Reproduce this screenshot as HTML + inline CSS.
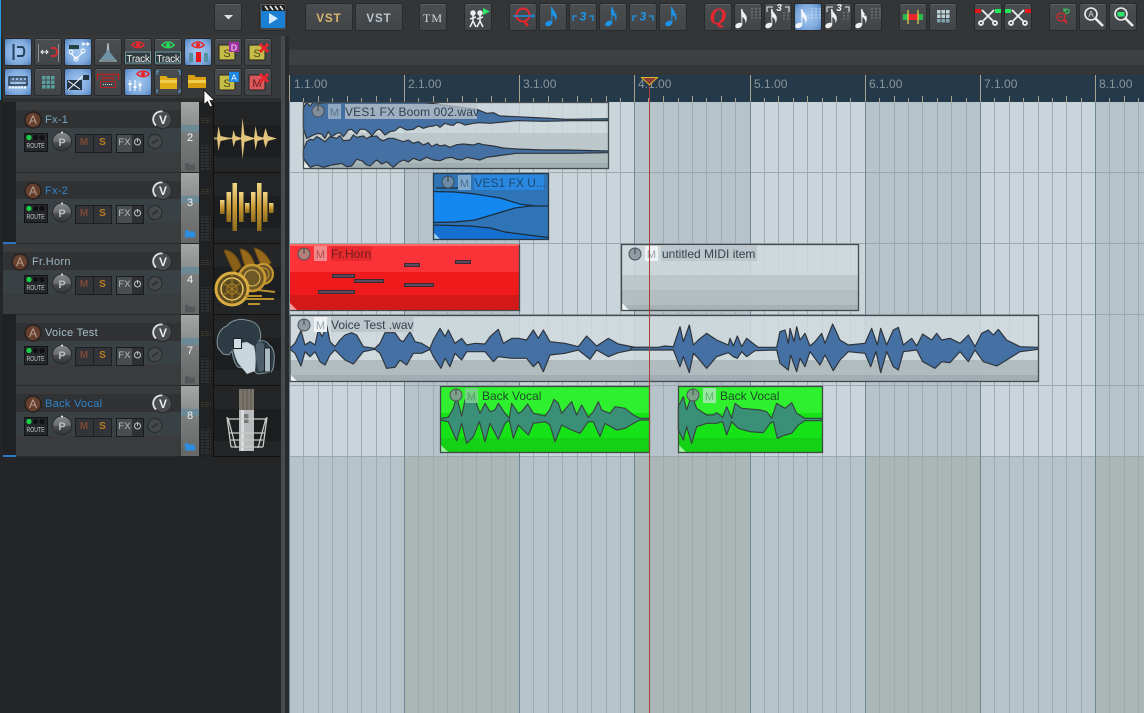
<!DOCTYPE html>
<html><head><meta charset="utf-8"><style>
html,body{margin:0;padding:0;background:#252627;overflow:hidden}
svg{display:block;font-family:"Liberation Sans",sans-serif}
</style></head><body>
<svg width="1144" height="713" viewBox="0 0 1144 713" xmlns="http://www.w3.org/2000/svg">
<defs>
<linearGradient id="gb" x1="0" y1="0" x2="0" y2="1"><stop offset="0" stop-color="#4b4e51"/><stop offset="1" stop-color="#424548"/></linearGradient>
<radialGradient id="ga" cx=".5" cy=".5" r=".72"><stop offset="0" stop-color="#a4c9f0"/><stop offset=".6" stop-color="#80aade"/><stop offset="1" stop-color="#4576b4"/></radialGradient>
<linearGradient id="gold" x1="0" y1="0" x2="0" y2="1"><stop offset="0" stop-color="#f2d88a"/><stop offset=".5" stop-color="#c99a35"/><stop offset="1" stop-color="#8f6a20"/></linearGradient>
<linearGradient id="knob" x1="0" y1="0" x2="0" y2="1"><stop offset="0" stop-color="#86898b"/><stop offset=".5" stop-color="#6a6d6f"/><stop offset=".55" stop-color="#4b4d4f"/><stop offset="1" stop-color="#303234"/></linearGradient>
<linearGradient id="num" x1="0" y1="0" x2="0" y2="1"><stop offset="0" stop-color="#a5a7a6"/><stop offset=".32" stop-color="#8e908f"/><stop offset=".33" stop-color="#6b8a96"/><stop offset=".42" stop-color="#6b8a96"/><stop offset=".43" stop-color="#7c7e7e"/><stop offset="1" stop-color="#666868"/></linearGradient>
<pattern id="mt" patternUnits="userSpaceOnUse" width="5" height="3"><rect width="4" height="2" fill="#2f3031"/></pattern>
<pattern id="mo" patternUnits="userSpaceOnUse" width="5" height="2"><rect width="4" height="1" fill="#36362a"/></pattern>
<g id="b"><rect x=".5" y=".5" width="27" height="27" rx="2" fill="url(#gb)" stroke="#292a2c"/><path d="M2 1.500H26" stroke="#5d6063"/></g>
<g id="a"><rect x=".5" y=".5" width="27" height="27" rx="2" fill="url(#ga)" stroke="#292a2c"/></g>
<path id="note" d="M0 0h1.300c.5 4 4.500 5 4.500 9.500c0 2-.6 3.500-1.500 5c.7-3.500-1.300-5.500-3-6.500V15c0 2.500-2.200 4.200-4.500 4.200c-1.500 0-2.500-.8-2.500-2c0-2 2.300-3.500 4.500-3.500c.9 0 1.500.2 1.700.4Z"/>
<g id="eye"><path d="M-6 0C-3-4 3-4 6 0C3 3.500-3 3.500-6 0Z" fill="none" stroke-width="1.600"/><circle r="2.200" stroke="none"/></g>
<g id="tbg">
 <rect x="16" y="0" width="165" height="70" fill="#393b3d"/>
 <rect x="16" y="8" width="165" height="18" fill="#303234"/>
 <rect x="16" y="26" width="165" height="24" fill="#3a4144"/>
 <rect x="16" y="70" width="165" height="1" fill="#2a2b2c"/>
 <rect x="181" y="0" width="18" height="70" fill="url(#num)"/>
 <rect x="199" y="0" width="15" height="71" fill="#202122"/>
 <rect x="201" y="16" width="10" height="5" fill="url(#mo)"/>
 <rect x="201" y="43" width="10" height="26" fill="url(#mt)"/>
 <rect x="214" y="0" width="67" height="70" fill="#242526"/>
 <rect x="214" y="23" width="67" height="32" fill="#1d1e1f"/>
 <rect x="213" y="0" width="1" height="71" fill="#111"/>
 <rect x="214" y="70" width="67" height="1" fill="#111"/>
</g>
<g id="ctl">
 <circle cx="162.500" cy="17.500" r="9" fill="#4a4c4e" stroke="#2a2b2c"/>
 <path d="M156 23.500A8 8 0 0 1 162.500 9.500" fill="none" stroke="#dfe2e3" stroke-width="1.800"/>
 <rect x="24.500" y="31.500" width="23" height="18" fill="#25272a" stroke="#121314"/>
 <circle cx="29" cy="35.500" r="2.600" fill="#18cf48"/><circle cx="35.500" cy="35.500" r="2.600" fill="#111"/><circle cx="42" cy="35.500" r="2.600" fill="#111"/>
 <circle cx="62" cy="39.500" r="9.500" fill="url(#knob)" stroke="#2a2b2c"/>
 <circle cx="62" cy="30.500" r="1" fill="#eee"/>
 <rect x="75.500" y="32.500" width="36" height="18" fill="#33333a" stroke="#1d1e1f"/><path d="M93.500 32.500V50.500" stroke="#1d1e1f"/>
 <rect x="116.500" y="32.500" width="27" height="18" fill="#2e3032" stroke="#1a1b1c"/><rect x="117" y="33" width="15" height="17" fill="#4a4d4f"/>
 <circle cx="137.500" cy="40" r="3" fill="none" stroke="#b8bec2" stroke-width="1.100"/><path d="M137.500 36V40" stroke="#b8bec2"/>
 <circle cx="155" cy="39.500" r="7" fill="#46494b" stroke="#28292a"/>
 <path d="M152 41.500L158 37.500" stroke="#333435" stroke-width="2.500"/>
</g>
<g id="folderico"><path d="M0 0h3l1 1.500h6v6H0Z"/></g>
</defs>

<rect width="1144" height="713" fill="#242526"/>
<rect width="1144" height="36" fill="#333537"/>
<rect x="0" y="0" width="1" height="100" fill="#2a9ae0"/>
<rect x="289" y="36" width="855" height="39" fill="#333537"/>
<rect x="289" y="50" width="855" height="15" fill="#3e4042"/>

<!-- top toolbar -->
<g>
<use href="#b" x="214" y="3"/><path d="M224 15h9l-4.500 4.500Z" fill="#dfe3e6"/>
<use href="#b" x="259" y="3"/>
<rect x="261" y="9" width="24" height="19" rx="2" fill="#1b7fd4"/><rect x="262" y="5" width="23" height="6" fill="#222"/><path d="M265 6l3 4M270 6l3 4M275 6l3 4M280 6l3 4" stroke="#eee" stroke-width="1.500"/><path d="M269 13l9 5.500-9 5.500Z" fill="#cfeaff"/>
<g fill="url(#gb)" stroke="#292a2c"><rect x="305.500" y="3.500" width="47" height="27" rx="2"/><rect x="355.500" y="3.500" width="47" height="27" rx="2"/></g>
<text x="329" y="22" text-anchor="middle" font-size="11.500" font-weight="bold" fill="#d9b56d" letter-spacing="1">VST</text>
<text x="379" y="22" text-anchor="middle" font-size="11.500" font-weight="bold" fill="#b9c5cb" letter-spacing="1">VST</text>
<use href="#b" x="419" y="3"/><text x="433" y="22" text-anchor="middle" font-size="12" font-family="Liberation Serif" fill="#d5d8da" letter-spacing="1">TM</text>
<use href="#b" x="464" y="3"/>
<g stroke="#eee" stroke-width="1.500" fill="none"><circle cx="473" cy="13" r="2" fill="#eee"/><path d="M473 15v6l-3 6M473 21l3 6M470 19l6-2"/><circle cx="480" cy="13" r="2" fill="#eee"/><path d="M480 15v6l-3 6M480 21l3 6M477 19l6-2"/></g><path d="M483 8l7 3.500-7 3.500Z" fill="#2ee86a"/>
<use href="#b" x="509" y="3"/><circle cx="523" cy="15" r="6.500" fill="none" stroke="#e8262c" stroke-width="2"/><path d="M524 21l4 5" stroke="#e8262c" stroke-width="2.500"/><path d="M513 16H531" stroke="#1d8fe0" stroke-width="1.500"/><path d="M531 16h4M533 14v4" stroke="#1d8fe0" stroke-width="1.200"/>
<use href="#b" x="539" y="3"/><use href="#note" x="551" y="7" fill="#1c96ea"/>
<use href="#b" x="569" y="3"/><path d="M573 21v-5h4M593 21v-5h-4" stroke="#1c96ea" stroke-width="1.300" fill="none"/><text x="583" y="20.500" text-anchor="middle" font-size="12" font-style="italic" font-weight="bold" fill="#1c96ea">3</text>
<use href="#b" x="599" y="3"/><use href="#note" x="611" y="7" fill="#1c96ea"/><path d="M614 10h3M614 13h4M615 16h4" stroke="#45484b"/>
<use href="#b" x="629" y="3"/><path d="M633 21v-5h4M653 21v-5h-4" stroke="#1c96ea" stroke-width="1.300" fill="none"/><text x="643" y="20.500" text-anchor="middle" font-size="12" font-style="italic" font-weight="bold" fill="#1c96ea">3</text>
<use href="#b" x="659" y="3"/><use href="#note" x="671" y="7" fill="#1c96ea"/><path d="M674 10h3M674 13h4M675 16h4" stroke="#45484b"/>
<use href="#b" x="704" y="3"/><text x="718" y="24" text-anchor="middle" font-size="23" font-family="Liberation Serif" font-style="italic" font-weight="bold" fill="#e8262c">Q</text>
<use href="#b" x="734" y="3"/><use href="#note" x="741" y="9" fill="#eee"/><path d="M752 8v11M756 8v11M760 8v11" stroke="#8b8f92" stroke-dasharray="1.500 1.500"/>
<use href="#b" x="764" y="3"/><use href="#note" x="771" y="9" fill="#eee"/><path d="M767 12V7h6M789 12V7h-4" stroke="#eee" fill="none"/><text x="779" y="11" text-anchor="middle" font-size="10" font-style="italic" font-weight="bold" fill="#eee">3</text><path d="M784 12v8M788 12v8" stroke="#8b8f92" stroke-dasharray="1.500 1.500"/>
<use href="#a" x="794" y="3"/><use href="#note" x="801" y="9" fill="#f2f7fc"/><path d="M812 8v11M816 8v11M820 8v11" stroke="#dbe8f4" stroke-dasharray="1.500 1.500"/>
<use href="#b" x="824" y="3"/><use href="#note" x="831" y="9" fill="#eee"/><path d="M827 12V7h6M849 12V7h-4" stroke="#eee" fill="none"/><text x="839" y="11" text-anchor="middle" font-size="10" font-style="italic" font-weight="bold" fill="#eee">3</text><path d="M844 12v8M848 12v8" stroke="#8b8f92" stroke-dasharray="1.500 1.500"/>
<use href="#b" x="854" y="3"/><use href="#note" x="861" y="9" fill="#eee"/><path d="M864 12h3M864 15h4" stroke="#45484b"/><path d="M872 8v11M876 8v11M880 8v11" stroke="#8b8f92" stroke-dasharray="1.500 1.500"/>
<use href="#b" x="899" y="3"/><rect x="903" y="14" width="20" height="6" fill="#2db84a"/><rect x="908" y="14" width="10" height="6" fill="#e8262c"/><path d="M908 10V24M918 10V24" stroke="#e6cf45" stroke-width="1.200"/>
<use href="#b" x="929" y="3"/><g fill="#bfd2da"><rect x="937" y="10" width="3.500" height="3.500"/><rect x="941.500" y="10" width="3.500" height="3.500"/><rect x="946" y="10" width="3.500" height="3.500"/><rect x="937" y="14.500" width="3.500" height="3.500"/><rect x="941.500" y="14.500" width="3.500" height="3.500"/><rect x="946" y="14.500" width="3.500" height="3.500"/></g><g fill="#7fa4ae"><rect x="937" y="19" width="3.500" height="3.500"/><rect x="941.500" y="19" width="3.500" height="3.500"/><rect x="946" y="19" width="3.500" height="3.500"/></g>
<use href="#b" x="974" y="3"/><g stroke="#eee" stroke-width="1.800" fill="none"><path d="M982 10l11 11M994 10l-11 11"/><circle cx="981" cy="23" r="2"/><circle cx="995" cy="23" r="2"/></g><rect x="975" y="9" width="6" height="4" fill="#e8161c"/><rect x="995" y="9" width="6" height="4" fill="#22e85a"/>
<use href="#b" x="1004" y="3"/><g stroke="#eee" stroke-width="1.800" fill="none"><path d="M1012 10l11 11M1024 10l-11 11"/><circle cx="1011" cy="23" r="2"/><circle cx="1025" cy="23" r="2"/></g><rect x="1005" y="9" width="6" height="4" fill="#22e85a"/><rect x="1025" y="9" width="6" height="4" fill="#e8161c"/>
<use href="#b" x="1049" y="3"/><circle cx="1061" cy="17" r="4" fill="none" stroke="#d42a30" stroke-width="1.300"/><path d="M1059 17h4" stroke="#d42a30"/><path d="M1064 20l3 3" stroke="#d42a30" stroke-width="2"/><path d="M1064 11c2-3 5-2 5 0s-2 3-4 2M1064 8v3h3" stroke="#3bc65c" fill="none" stroke-width="1.100"/>
<use href="#b" x="1079" y="3"/><circle cx="1091" cy="14" r="6" fill="none" stroke="#eee" stroke-width="1.600"/><path d="M1095 18l8 8" stroke="#eee" stroke-width="2.500"/><text x="1091" y="17" text-anchor="middle" font-size="8" fill="#ddd">A</text>
<use href="#b" x="1109" y="3"/><circle cx="1121" cy="14" r="6" fill="none" stroke="#eee" stroke-width="1.600"/><path d="M1125 18l8 8" stroke="#eee" stroke-width="2.500"/><rect x="1117.500" y="12" width="7" height="4.500" fill="#2ee86a"/>
</g>

<!-- left toolbar -->
<rect x="3" y="36" width="278" height="62" fill="#38393b"/>
<rect x="3" y="98" width="278" height="4" fill="#2d2e30"/>
<rect x="281" y="36" width="4" height="677" fill="#48494b"/>
<rect x="285" y="36" width="4" height="677" fill="#2a2b2c"/>
<g>
<use href="#a" x="4" y="38"/><path d="M13.500 44V60" stroke="#25425f" stroke-width="2"/><path d="M17 47h5c3 0 3 9 0 9h-5" fill="none" stroke="#25425f" stroke-width="2"/>
<use href="#b" x="34" y="38"/><path d="M38.500 44V62M58.500 44V62" stroke="#8d9296"/><path d="M41 52h7M43 50l-2 2 2 2M46 50l2 2-2 2" stroke="#eee" fill="none"/><path d="M51 48h3c4 0 4 8 0 8h-3" fill="none" stroke="#d22c30" stroke-width="2"/>
<use href="#a" x="64" y="38"/><path d="M69 45h10v4H69Z" fill="#244"/><path d="M82 44h7M84 42.500l-2 1.500 2 1.500M87 42.500l2 1.500-2 1.500" stroke="#fff" fill="none"/><path d="M71 53l5 6 7-7" stroke="#fff" fill="none"/><g fill="none" stroke="#fff"><circle cx="71" cy="52" r="2"/><circle cx="76" cy="59" r="2"/><circle cx="83" cy="51" r="2"/></g>
<use href="#b" x="94" y="38"/><path d="M108 43l-1 9-7 9h16l-7-9Z" fill="none" stroke="#b8c6cc"/><path d="M108 50l-8 10h16Z" fill="#6f93a6"/>
<use href="#b" x="124" y="38"/><use href="#eye" x="138" y="45" fill="#e8262c" stroke="#e8262c"/><rect x="125.500" y="52" width="25" height="11" fill="#2e3a3e" stroke="#6d9aa4"/><text x="138" y="62" text-anchor="middle" font-size="10" fill="#eee" letter-spacing="-.3">Track</text>
<use href="#b" x="154" y="38"/><use href="#eye" x="168" y="45" fill="#28d85c" stroke="#28d85c"/><rect x="155.500" y="52" width="25" height="11" fill="#2e3a3e" stroke="#6d9aa4"/><text x="168" y="62" text-anchor="middle" font-size="10" fill="#eee" letter-spacing="-.3">Track</text>
<use href="#a" x="184" y="38"/><use href="#eye" x="198" y="45" fill="#e8262c" stroke="#e8262c"/><rect x="189" y="53" width="4" height="9" fill="#55919e"/><rect x="196" y="52" width="5" height="10" fill="#e8161c"/><rect x="204" y="53" width="4" height="9" fill="#55919e"/>
<use href="#b" x="214" y="38"/><rect x="219" y="45" width="16" height="15" rx="1" fill="#c6bd48" stroke="#222"/><text x="227" y="57" text-anchor="middle" font-size="11" fill="#4c4a18">S</text><rect x="229" y="42" width="10" height="10" fill="#a42fa4"/><text x="234" y="50.500" text-anchor="middle" font-size="8.500" fill="#fff">D</text>
<use href="#b" x="244" y="38"/><rect x="249" y="45" width="16" height="15" rx="1" fill="#c6bd48" stroke="#222"/><text x="257" y="57" text-anchor="middle" font-size="11" fill="#4c4a18">S</text><path d="M260 44l8 8M268 44l-8 8" stroke="#e8262c" stroke-width="3"/>
<use href="#a" x="4" y="68"/><rect x="9" y="77" width="18" height="8" fill="none" stroke="#15222e" stroke-width="1.300"/><path d="M11 82v-4M13 82v-2M15 82v-4M17 82v-2M19 82v-4M21 82v-2M23 82v-4M25 82v-2" stroke="#15222e"/><path d="M9 87.500h18" stroke="#fff" stroke-width="2" stroke-dasharray="2 1"/>
<use href="#b" x="34" y="68"/><g fill="#5ba0a0"><rect x="42" y="76" width="3.500" height="3.500"/><rect x="46.500" y="76" width="3.500" height="3.500"/><rect x="51" y="76" width="3.500" height="3.500"/><rect x="42" y="80.500" width="3.500" height="3.500"/><rect x="46.500" y="80.500" width="3.500" height="3.500"/><rect x="51" y="80.500" width="3.500" height="3.500"/><rect x="42" y="85" width="3.500" height="3.500"/><rect x="46.500" y="85" width="3.500" height="3.500"/><rect x="51" y="85" width="3.500" height="3.500"/></g>
<use href="#a" x="64" y="68"/><path d="M67 80h15v10H67Z" fill="#234"/><path d="M68 81l12 8M68 90l16-15" stroke="#fff" fill="none"/><rect x="83" y="75" width="6" height="5" fill="#234"/>
<use href="#b" x="94" y="68"/><path d="M97.500 80V74.500h10M108 74.500h10.500V80M103 80v-2h10v2" stroke="#b52226" stroke-width="1.500" fill="none"/><rect x="100.500" y="81.500" width="15" height="6" fill="#45484b" stroke="#b52226"/><path d="M103 84.500h10" stroke="#ddd" stroke-dasharray="1 1"/>
<use href="#a" x="124" y="68"/><use href="#eye" x="143" y="74" fill="#e8262c" stroke="#e8262c"/><path d="M130 80v11M135 80v11M140 82v9" stroke="#fff"/><rect x="128.500" y="83" width="3" height="2" fill="#fff"/><rect x="133.500" y="86" width="3" height="2" fill="#fff"/><rect x="138.500" y="84" width="3" height="2" fill="#fff"/>
<use href="#b" x="154" y="68"/><path d="M158 72v-1h-1v4M178 71h2v4M158 92h-1v-3M178 92h2v-3" stroke="#4da3df" fill="none"/><path d="M160 76h6l2 2h9v11h-17Z" fill="#e0ac18"/><path d="M160 80h17v3h-17Z" fill="#f2cd4e"/>
<path d="M188 75h6l2 2h10v11h-18Z" fill="#d99f10"/><path d="M188 80h18v3h-18Z" fill="#f2cd4e"/>
<use href="#b" x="214" y="68"/><rect x="219" y="75" width="16" height="15" rx="1" fill="#c6bd48" stroke="#222"/><text x="227" y="87" text-anchor="middle" font-size="11" fill="#4c4a18">S</text><rect x="229" y="72" width="10" height="10" fill="#1c86e8"/><text x="234" y="80.500" text-anchor="middle" font-size="8.500" fill="#fff">A</text>
<use href="#b" x="244" y="68"/><rect x="249" y="75" width="16" height="15" rx="1" fill="#d8585c" stroke="#222"/><text x="257" y="87" text-anchor="middle" font-size="11" fill="#6a1518">M</text><path d="M260 74l8 8M268 74l-8 8" stroke="#e8262c" stroke-width="3"/>
</g>

<!-- arrange background -->
<rect x="289" y="102" width="855" height="611" fill="#b6c3c9"/>
<rect x="289" y="102" width="855" height="354" fill="#c9d5da"/>
<g fill="#abb7b7"><rect x="404" y="456" width="115" height="257"/><rect x="634" y="456" width="116" height="257"/><rect x="865" y="456" width="115" height="257"/><rect x="1095" y="456" width="49" height="257"/></g>
<g fill="#b7c3ca"><rect x="404" y="102" width="115" height="354"/><rect x="634" y="102" width="116" height="354"/><rect x="865" y="102" width="115" height="354"/><rect x="1095" y="102" width="49" height="354"/></g>
<path d="M303.500 102V713M318.500 102V713M332.500 102V713M347.500 102V713M361.500 102V713M376.500 102V713M390.500 102V713M418.500 102V713M433.500 102V713M447.500 102V713M462.500 102V713M476.500 102V713M491.500 102V713M505.500 102V713M533.500 102V713M548.500 102V713M562.500 102V713M577.500 102V713M591.500 102V713M606.500 102V713M620.500 102V713M663.500 102V713M678.500 102V713M692.500 102V713M706.500 102V713M721.500 102V713M735.500 102V713M764.500 102V713M778.500 102V713M793.500 102V713M807.500 102V713M822.500 102V713M836.500 102V713M850.500 102V713M879.500 102V713M894.500 102V713M908.500 102V713M922.500 102V713M937.500 102V713M951.500 102V713M966.500 102V713M994.500 102V713M1009.500 102V713M1023.500 102V713M1038.500 102V713M1052.500 102V713M1066.500 102V713M1081.500 102V713M1109.500 102V713M1124.500 102V713M1138.500 102V713" stroke="#9dabb1" fill="none"/>
<path d="M289 172.500H1144M289 243.500H1144M289 314.500H1144M289 385.500H1144M289 456.500H1144" stroke="#9aa9ae"/>
<path d="M404.500 102V713M519.500 102V713M634.500 102V713M750.500 102V713M865.500 102V713M980.500 102V713M1095.500 102V713" stroke="#6f8792"/>
<rect x="289" y="102" width="1" height="611" fill="#6f8792"/>

<!-- ruler -->
<rect x="289" y="75" width="855" height="27" fill="#24394a"/>
<path d="M289.500 75V102M404.500 75V102M519.500 75V102M634.500 75V102M750.500 75V102M865.500 75V102M980.500 75V102M1095.500 75V102" stroke="#a8a18c"/>
<path d="M303.500 98V102M318.500 96V102M332.500 98V102M347.500 96V102M361.500 98V102M376.500 96V102M390.500 98V102M418.500 98V102M433.500 96V102M447.500 98V102M462.500 96V102M476.500 98V102M491.500 96V102M505.500 98V102M533.500 98V102M548.500 96V102M562.500 98V102M577.500 96V102M591.500 98V102M606.500 96V102M620.500 98V102M648.500 98V102M663.500 96V102M678.500 98V102M692.500 96V102M706.500 98V102M721.500 96V102M735.500 98V102M764.500 98V102M778.500 96V102M793.500 98V102M807.500 96V102M822.500 98V102M836.500 96V102M850.500 98V102M879.500 98V102M894.500 96V102M908.500 98V102M922.500 96V102M937.500 98V102M951.500 96V102M966.500 98V102M994.500 98V102M1009.500 96V102M1023.500 98V102M1038.500 96V102M1052.500 98V102M1066.500 96V102M1081.500 98V102M1109.500 98V102M1124.500 96V102M1138.500 98V102" stroke="#a8a18c"/>
<g font-size="12" fill="#8a959b">
<text x="294" y="88">1.1.00</text><text x="408" y="88">2.1.00</text><text x="523" y="88">3.1.00</text><text x="638" y="88">4.1.00</text><text x="754" y="88">5.1.00</text><text x="869" y="88">6.1.00</text><text x="984" y="88">7.1.00</text><text x="1099" y="88">8.1.00</text>
</g>

<!-- tracks -->
<rect x="3" y="102" width="13" height="354" fill="#1f2122"/>
<rect x="3" y="244" width="13" height="70" fill="#393b3d"/>
<rect x="3" y="252" width="13" height="18" fill="#303234"/>
<rect x="3" y="270" width="13" height="24" fill="#3a4144"/>
<rect x="3" y="242" width="13" height="2" fill="#2a79c0"/>
<rect x="3" y="455" width="13" height="2" fill="#2a79c0"/>
<use href="#tbg" y="102"/><use href="#tbg" y="173"/><use href="#tbg" y="244"/><use href="#tbg" y="315"/><use href="#tbg" y="386"/>
<use href="#ctl" y="102"/><use href="#ctl" y="173"/><use href="#ctl" y="244"/><use href="#ctl" y="315"/><use href="#ctl" y="386"/>
<g fill="#66402f" stroke="#26211f" stroke-width="1.500"><circle cx="33" cy="120" r="8"/><circle cx="33" cy="191" r="8"/><circle cx="20" cy="262" r="8"/><circle cx="33" cy="333" r="8"/><circle cx="33" cy="404" r="8"/></g>
<g font-size="12" fill="#b8a090" text-anchor="middle"><text x="33" y="124">A</text><text x="33" y="195">A</text><text x="20" y="266">A</text><text x="33" y="337">A</text><text x="33" y="408">A</text></g>
<g font-size="11" letter-spacing=".3">
<text x="45" y="123" fill="#7aa6c0">Fx-1</text>
<text x="45" y="194" fill="#2f84cc">Fx-2</text>
<text x="32" y="265" fill="#9db3bf">Fr.Horn</text>
<text x="45" y="336" fill="#a8c0cc">Voice Test</text>
<text x="45" y="407" fill="#2f84cc">Back Vocal</text>
</g>
<g font-size="12" font-weight="bold" fill="#e8ecee" text-anchor="middle"><text x="163" y="124">V</text><text x="163" y="195">V</text><text x="163" y="266">V</text><text x="163" y="337">V</text><text x="163" y="408">V</text></g>
<g font-size="7" fill="#c2c7ca"><text x="26.500" y="148" textLength="18" lengthAdjust="spacingAndGlyphs">ROUTE</text><text x="26.500" y="219" textLength="18" lengthAdjust="spacingAndGlyphs">ROUTE</text><text x="26.500" y="290" textLength="18" lengthAdjust="spacingAndGlyphs">ROUTE</text><text x="26.500" y="361" textLength="18" lengthAdjust="spacingAndGlyphs">ROUTE</text><text x="26.500" y="432" textLength="18" lengthAdjust="spacingAndGlyphs">ROUTE</text></g>
<g font-size="11" font-weight="bold" fill="#b8bcbe" text-anchor="middle"><text x="62" y="146">P</text><text x="62" y="217">P</text><text x="62" y="288">P</text><text x="62" y="359">P</text><text x="62" y="430">P</text></g>
<g font-size="10" font-weight="bold" fill="#7b4a34" text-anchor="middle"><text x="84" y="145">M</text><text x="84" y="216">M</text><text x="84" y="287">M</text><text x="84" y="358">M</text><text x="84" y="429">M</text></g>
<g font-size="10" font-weight="bold" fill="#b97f1f" text-anchor="middle"><text x="102.500" y="145">S</text><text x="102.500" y="216">S</text><text x="102.500" y="287">S</text><text x="102.500" y="358">S</text><text x="102.500" y="429">S</text></g>
<g font-size="9.500" fill="#b7bec2" text-anchor="middle"><text x="124.500" y="145">FX</text><text x="124.500" y="216">FX</text><text x="124.500" y="287">FX</text><text x="124.500" y="358">FX</text><text x="124.500" y="429">FX</text></g>
<g font-size="11" fill="#f0f3f4" text-anchor="middle"><text x="190" y="141">2</text><text x="190" y="206">3</text><text x="190" y="283">4</text><text x="190" y="354">7</text><text x="190" y="419">8</text></g>
<g fill="#55575a"><use href="#folderico" x="185" y="163"/><use href="#folderico" x="185" y="305"/><use href="#folderico" x="185" y="376"/></g>
<g fill="#2b8ce0"><use href="#folderico" x="185" y="230"/><use href="#folderico" x="185" y="443"/></g>

<!-- track images -->
<g fill="#e2c47c">
<path d="M214 137.500L277 138L214 139.500Z" fill-opacity=".8"/>
<path d="M218.500 126L220.500 136L232 138.500L220.500 141L218.500 151L217 138Z"/>
<path d="M233.500 130L235.500 136L243 138.500L235.500 141L233.500 147L232 138Z"/>
<path d="M242.500 118L244.500 135L256 138.500L244.500 142L242.500 159L241 138Z"/>
<path d="M255.500 126L257.500 136L266 138.500L257.500 141L255.500 150L254 138Z"/>
<path d="M265.500 128L268 136L277 138.500L268 141L265.500 148L263 138Z"/>
</g>
<g fill="url(#gold)"><rect x="220" y="200" width="4.500" height="14"/><rect x="226.500" y="192" width="4.500" height="30"/><rect x="232.500" y="183" width="4.500" height="48"/><rect x="239" y="192" width="4.500" height="30"/><rect x="245" y="203" width="4.500" height="10"/><rect x="251" y="192" width="4.500" height="30"/><rect x="257" y="183" width="4.500" height="48"/><rect x="263" y="192" width="4.500" height="30"/><rect x="269" y="203" width="4.500" height="10"/></g>
<!-- horn -->
<g fill="none" stroke="#c89a32">
<path d="M224 250c7 0 14 6 17 17l-7 6c-3-8-7-14-10-23Z" fill="#8a5f18" stroke="#6b4a12"/>
<path d="M240 249c7 0 12 7 15 16l-8 6c-3-7-5-13-7-22Z" fill="#96691c" stroke="#6b4a12"/>
<path d="M254 248c7 1 13 7 17 15l-8 6c-3-6-6-12-9-21Z" fill="#96691c" stroke="#6b4a12"/>
<circle cx="263" cy="274" r="10" stroke-width="2" fill="#6a5526"/><circle cx="263" cy="274" r="6"/>
<circle cx="252" cy="278" r="13" stroke-width="2.500" fill="#6e5826"/><circle cx="252" cy="278" r="8" stroke="#e0bd5c"/>
<circle cx="232" cy="289" r="16" stroke-width="3" stroke="#d8ac3e" fill="#5e4a20"/><circle cx="232" cy="289" r="11" stroke="#e8c868" stroke-width="1.500"/><circle cx="232" cy="289" r="5" stroke="#a88028"/>
<path d="M222 282L242 296M222 296L242 282M232 274V304" stroke="#a88028"/>
<path d="M245 296h17M246 299h28M258 290l17 2M248 304h12" stroke-width="2" stroke="#b8912e"/>
</g>
<!-- pony -->
<path d="M218 348c-3-10 2-20 9-22c3-5 12-8 19-6c8 1 13 5 14 11c1 4 1 8-1 10c5-1 8 0 10 4c4 2 6 8 5 16c0 6-1 9-3 11l-13 2l-6-4l-14-3c-4-4-5-10-6-16l-3 4l-6-1Z" fill="#2c3b44" stroke="#8496a0"/>
<path d="M233 344l14-2 7 4c2 8 2 16 1 25l-8 3-9-11c-3-6-5-12-5-19Z" fill="#c9d6dc"/>
<rect x="233.500" y="338.500" width="8" height="10" fill="#d4dee2" stroke="#1d2428"/>
<path d="M256 344c4-3 7-2 8 2l1 24-6 2c-3-9-4-19-3-28Z" fill="#4c5f6a"/>
<rect x="264.500" y="348" width="6" height="24" fill="#a9bac2" stroke="#1d2428"/>
<!-- mic -->
<g>
<rect x="239" y="389" width="15" height="21" fill="#7a756c"/><path d="M243 389v21M247 389v21M251 389v21" stroke="#5c584f"/>
<rect x="239" y="410" width="15" height="41" fill="#b9bcbc"/><rect x="243.500" y="414" width="5" height="9" fill="#777a7a"/><rect x="241" y="410" width="3" height="41" fill="#d8dbdb"/>
<path d="M227 417l4 30M267 417l-4 30M227 419h40M229 433h36M231 440h32M228 418l8 30M266 418l-8 30M231 447h32" stroke="#c7ccc6" fill="none" stroke-width="1.300"/>
</g>

<!-- items -->
<!-- Boom -->
<g>
<rect x="303.500" y="102.500" width="305" height="66" fill="#cfd9de" fill-opacity=".8"/>
<g fill-opacity=".85"><rect x="304" y="133" width="304" height="20" fill="#b9c4c8"/><rect x="304" y="153" width="304" height="10" fill="#a8b5b7"/><rect x="304" y="163" width="304" height="5" fill="#9aa8ab"/></g>
<g transform="translate(290 70) scale(.33333)">
<path d="M40 115L50 97L60 108L70 97L90 100L120 97L300 97L400 97L560 118L575 124L590 130L610 128L630 138L680 140L760 144L830 148L955 146V152L850 152L760 154L680 152L640 156L600 160L570 158L550 160L525 165L510 158L500 158L490 166L480 165L465 160L450 172L440 165L430 168L415 170L400 175L385 168L370 178L350 180L330 170L315 182L300 185L285 195L270 178L260 180L245 198L240 190L225 178L210 178L200 192L185 178L175 180L160 200L150 188L140 190L125 200L115 185L105 205L95 192L85 190L70 195L50 205L40 175Z" fill="#4470a4" stroke="#2e3338" stroke-width="3.500" stroke-linejoin="round"/>
<path d="M40 240L50 215L60 208L70 210L80 200L90 205L105 215L120 200L140 205L150 197L160 212L180 210L190 195L200 202L220 198L230 206L240 200L260 198L270 208L280 212L295 205L310 205L325 210L340 215L355 210L370 220L385 215L400 225L415 218L425 230L440 222L450 228L465 225L480 232L500 224L520 222L550 225L565 220L580 224L610 228L640 234L680 237L760 240L830 240L955 243V248L850 250L760 250L680 250L640 255L620 258L590 262L570 270L560 268L530 262L515 270L500 268L485 262L470 264L450 272L430 270L410 262L390 272L370 265L355 276L340 270L325 278L310 292L290 275L275 282L260 270L240 288L230 285L215 272L200 268L185 288L170 290L155 280L145 282L125 285L115 288L100 292L80 285L60 292L50 278L40 265Z" fill="#4470a4" stroke="#2e3338" stroke-width="3.500" stroke-linejoin="round"/>
</g>
<path d="M304 162v6h6Z" fill="#eef2f3"/>
<rect x="303.500" y="102.500" width="305" height="66" fill="none" stroke="#444a4e" stroke-width="1.300"/>
<rect x="345" y="104" width="132" height="15" fill="#bcc6cb" fill-opacity=".75"/>
<rect x="328" y="104" width="13" height="15" fill="#8ea7c2"/>
<circle cx="318" cy="111" r="6" fill="#7f8e9a" stroke="#4a5156"/><path d="M318 105v6" stroke="#444"/>
<text x="334.500" y="116" font-size="11" text-anchor="middle" fill="#5e7184">M</text>
<text x="345" y="116" font-size="12" fill="#33424d" letter-spacing=".1">VES1 FX Boom 002.wav</text>
</g>
<!-- VES1 U -->
<g>
<rect x="433.500" y="173.500" width="115" height="66" fill="#2f74b6"/>
<path d="M433 190L460 192L490 195L510 200L530 205L548 206L530 206L510 210L490 216L470 220L433 222Z" fill="#1488f0"/>
<path d="M433 226L470 226L490 228L510 233L548 238V239H433Z" fill="#1570d0"/>
<path d="M433 191.500L455 192L475 194L500 198L520 204L535 206L548 206M433 222.500L455 222L475 220L495 214L515 208L530 206L548 206M433 225L470 226L490 228L505 232L520 234L548 237.500M436 188L455 188L470 187" fill="none" stroke="#1d2c3a" stroke-width="1.300"/>
<path d="M434 233v6h6Z" fill="#9cd0f4"/>
<rect x="433.500" y="173.500" width="115" height="66" fill="none" stroke="#283a48" stroke-width="1.300"/>
<rect x="474" y="175" width="70" height="15" fill="#2a88e0"/>
<rect x="458" y="175" width="13" height="15" fill="#7fa9cf"/>
<circle cx="448" cy="182" r="6" fill="#6d8ba6" stroke="#3c4a56"/><path d="M448 176v6" stroke="#344"/>
<text x="464.500" y="187" font-size="11" text-anchor="middle" fill="#4a6c8c">M</text>
<text x="474.500" y="187" font-size="12" fill="#174a72">VES1 FX U...</text>
</g>
<!-- Fr Horn -->
<g>
<rect x="290" y="244.500" width="229.500" height="66" fill="#fb3237"/>
<rect x="290" y="272" width="229" height="23" fill="#ee1a1c"/><rect x="290" y="295" width="229" height="15" fill="#d21818"/>
<rect x="290" y="244" width="229.500" height="2" fill="#f66"/>
<g fill="#5d4a5e" stroke="#3a2a33"><rect x="332.500" y="274.500" width="22" height="3"/><rect x="354.500" y="279.500" width="29" height="3"/><rect x="318.500" y="290.500" width="36" height="3"/><rect x="404.500" y="263.500" width="15" height="3"/><rect x="404.500" y="283.500" width="29" height="3"/><rect x="455.500" y="260.500" width="15" height="3"/></g>
<path d="M290 303v7h7Z" fill="#f79a9c"/>
<path d="M519.500 244.500V310.500H290" fill="none" stroke="#444a4e" stroke-width="1.300"/>
<rect x="331" y="246" width="41" height="15" fill="#e62a2e"/>
<rect x="314" y="246" width="13" height="15" fill="#f08a8c"/>
<circle cx="304" cy="254" r="6" fill="#b0807a" stroke="#4a5156"/><path d="M304 248v6" stroke="#444"/>
<text x="320.500" y="258" font-size="11" text-anchor="middle" fill="#b04a4c">M</text>
<text x="331" y="258" font-size="12" fill="#6e1c1e">Fr.Horn</text>
</g>
<!-- MIDI -->
<g>
<rect x="621.500" y="244.500" width="237" height="66" fill="#cfd9de" fill-opacity=".85"/>
<g fill-opacity=".88"><rect x="622" y="275" width="236" height="15" fill="#bac5c9"/><rect x="622" y="290" width="236" height="15" fill="#aeb9bc"/><rect x="622" y="305" width="236" height="5" fill="#a0adb0"/></g>
<path d="M622 303v7h7Z" fill="#f0f4f5"/>
<rect x="621.500" y="244.500" width="237" height="66" fill="none" stroke="#444a4e" stroke-width="1.300"/>
<rect x="661" y="246" width="96" height="15" fill="#bcc6cb"/>
<rect x="645" y="246" width="13" height="15" fill="#eef2f4"/>
<circle cx="635" cy="254" r="6" fill="#8f9ca3" stroke="#4a5156"/><path d="M635 248v6" stroke="#444"/>
<text x="651.500" y="258" font-size="11" text-anchor="middle" fill="#98a4aa">M</text>
<text x="662" y="258" font-size="12" fill="#33424d">untitled MIDI item</text>
</g>
<!-- Voice test -->
<g>
<rect x="290" y="315.500" width="748.500" height="66" fill="#cfd9de" fill-opacity=".88"/>
<g fill-opacity=".9"><rect x="290" y="360" width="748" height="15" fill="#adb8bb"/><rect x="290" y="375" width="748" height="6" fill="#9ba9ad"/></g>
<g transform="translate(285 240) scale(.33333)" fill="#4470a4" stroke="#2e3338" stroke-width="3.500" stroke-linejoin="round">
<path d="M15 325L30 310L48 272L60 315L75 305L90 315L100 270L112 290L125 255L135 305L150 320L165 300L180 285L200 278L215 285L235 320L270 325L285 310L300 278L330 278L345 300L355 305L375 275L390 305L410 310L435 325L445 300L465 265L480 290L490 270L510 310L530 295L545 315L570 310L600 312L615 290L640 268L655 310L680 295L700 295L725 300L745 270L760 295L775 270L795 305L840 310L880 320L905 288L935 318L970 295L1000 312L1050 322L1098 322V328L1050 328L1000 338L970 350L935 330L915 358L880 330L840 340L795 345L775 395L760 365L745 380L725 355L680 355L640 350L625 365L600 335L545 335L530 360L510 340L495 380L480 355L468 385L445 350L435 328L410 340L385 340L365 375L345 360L330 382L305 385L285 340L270 328L235 335L205 372L180 360L165 345L150 330L135 345L120 375L105 365L90 335L75 350L60 335L48 378L30 340L15 328Z"/>
</g>
<g transform="translate(640 310) scale(.33333)" fill="#4470a4" stroke="#2e3338" stroke-width="3.500" stroke-linejoin="round">
<path d="M-27 112L55 112L75 108L100 110L120 50L130 95L148 45L160 105L175 90L200 70L230 90L265 105L270 85L280 108L292 78L305 110L320 85L345 105L355 112L410 112L420 65L435 60L445 100L450 55L462 95L470 50L480 90L495 70L510 108L525 95L545 70L555 100L578 42L600 90L625 105L675 100L695 55L712 105L722 55L740 105L760 60L775 52L790 105L815 85L830 108L848 72L875 90L890 70L905 90L930 85L960 100L985 75L1005 110L1025 70L1045 60L1060 75L1075 58L1100 90L1140 110L1195 112V118L1140 125L1100 150L1070 168L1030 155L1005 120L985 155L960 125L930 158L905 155L885 175L848 155L830 120L790 125L775 180L760 170L740 125L722 188L708 125L692 170L675 130L625 125L600 150L580 182L555 135L540 165L510 125L495 170L480 145L470 185L452 135L445 180L420 160L410 120L345 122L320 140L305 125L292 145L280 140L265 128L230 140L200 175L175 145L160 130L148 188L130 140L120 170L100 120L-27 120Z"/>
</g>
<path d="M290 374v7h7Z" fill="#f0f4f5"/>
<rect x="290" y="315.500" width="748.500" height="66" fill="none" stroke="#444a4e" stroke-width="1.300"/>
<rect x="331" y="317" width="83" height="15" fill="#bcc6cb"/>
<rect x="314" y="317" width="13" height="15" fill="#eef2f4"/>
<circle cx="304" cy="325" r="6" fill="#8f9ca3" stroke="#4a5156"/><path d="M304 319v6" stroke="#444"/>
<text x="320.500" y="329" font-size="11" text-anchor="middle" fill="#98a4aa">M</text>
<text x="331" y="329" font-size="12" fill="#33424d">Voice Test .wav</text>
</g>
<!-- Back vocal -->
<g>
<rect x="440.500" y="386.500" width="209" height="66" fill="#2ef02e"/>
<rect x="441" y="413" width="208" height="25" fill="#15e318"/><rect x="441" y="438" width="208" height="14" fill="#14d116"/>
<rect x="678.500" y="386.500" width="144" height="66" fill="#2ef02e"/>
<rect x="679" y="413" width="143" height="25" fill="#15e318"/><rect x="679" y="438" width="143" height="14" fill="#14d116"/>
<g transform="translate(430 380) scale(.33333)" fill="#3a9077" stroke="#36453f" stroke-width="3.500" stroke-linejoin="round">
<path d="M32 115L55 112L70 85L80 50L95 108L105 60L130 45L150 100L165 70L180 95L195 90L205 70L225 100L238 115L245 70L265 100L275 95L293 72L310 100L345 108L360 88L372 58L385 70L395 100L425 65L440 105L455 75L475 112L490 95L505 65L515 90L540 100L555 80L585 85L610 105L630 115L657 115V120L630 120L610 130L585 145L560 150L525 130L510 170L490 125L475 125L450 160L425 150L395 135L375 185L360 135L345 125L310 130L295 165L265 135L250 175L238 120L225 130L205 178L180 130L165 185L148 125L130 170L110 190L95 130L80 182L70 160L55 125L32 120Z"/>
<path d="M745 118L745 80L760 50L770 90L785 45L800 85L830 105L850 105L860 98L878 112L890 80L905 115L915 70L935 85L990 90L1010 95L1025 115L1040 70L1065 85L1085 68L1100 100L1125 115L1175 115V122L1125 122L1105 135L1085 160L1065 165L1042 175L1030 125L1020 130L1000 158L960 155L925 145L905 125L890 165L878 125L860 130L830 130L800 140L785 190L770 140L760 180L745 150Z"/>
</g>
<path d="M441 445v7h7Z" fill="#9cf09c"/><path d="M679 445v7h7Z" fill="#9cf09c"/>
<rect x="440.500" y="386.500" width="209" height="66" fill="none" stroke="#3e4a44" stroke-width="1.300"/>
<rect x="678.500" y="386.500" width="144" height="66" fill="none" stroke="#3e4a44" stroke-width="1.300"/>
<rect x="465" y="388" width="13" height="15" fill="#7fd08f" fill-opacity=".85"/><rect x="703" y="388" width="13" height="15" fill="#9ae8a4"/>
<circle cx="456" cy="395" r="6" fill="#7ea08a" stroke="#4a5156"/><path d="M456 389v6" stroke="#444"/>
<circle cx="693" cy="395" r="6" fill="#7ea08a" stroke="#4a5156"/><path d="M693 389v6" stroke="#444"/>
<text x="471.500" y="400" font-size="11" text-anchor="middle" fill="#5a9a6c">M</text><text x="709.500" y="400" font-size="11" text-anchor="middle" fill="#62b070">M</text>
<text x="482" y="400" font-size="12" fill="#1d4c2a">Back Vocal</text><text x="720" y="400" font-size="12" fill="#1d4c2a">Back Vocal</text>
</g>

<!-- playhead -->
<path d="M649.500 82V713" stroke="#a8403a"/>
<path d="M641.500 77.500H657.500L649.500 85Z" fill="#8c3a36" stroke="#e0b828"/>

<!-- cursor -->
<path d="M204 90V104.500L207.500 101.500L210 107L212.500 106L210 100.500H214.500Z" fill="#fff" stroke="#111" stroke-width=".8"/>
</svg>
</body></html>
